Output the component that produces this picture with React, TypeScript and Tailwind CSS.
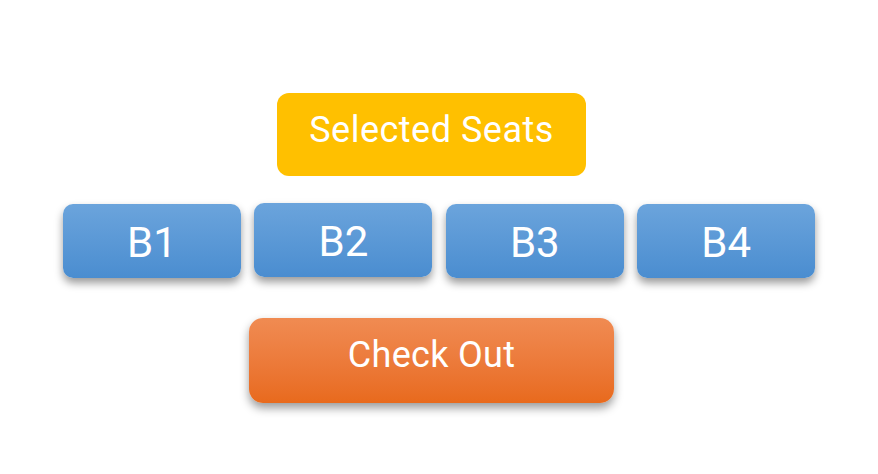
const seats = ['B1', 'B2', 'B3', 'B4'];

export default function App() {
  return (
    <div className="h-[474px] w-[878px] bg-white pt-[93px] font-['Roboto',sans-serif] text-white">
      <div className="ml-[277px] flex h-[83px] w-[309px] items-center justify-center rounded-[12px] bg-[#ffc000] pb-[10px] text-[36px] tracking-[0.5px]">
        Selected Seats
      </div>

      <div className="ml-[63px] mt-[28px] flex gap-[13.4px]">
        {seats.map((seat, i) => (
          <div
            key={seat}
            className={`flex h-[74px] w-[178px] items-center justify-center rounded-[10px] bg-gradient-to-b from-[#6ba4dc] to-[#4a8dd0] pt-[2px] text-[42px] shadow-[0_5px_9px_rgba(0,0,0,0.4)] ${i === 1 ? '-mt-px' : ''}`}
          >
            {seat}
          </div>
        ))}
      </div>

      <div className="ml-[249px] mt-[40px] flex h-[85px] w-[365px] items-center justify-center rounded-[14px] bg-gradient-to-b from-[#f08b52] to-[#e86a1c] pb-[12px] text-[36px] tracking-[0.3px] shadow-[0_5px_10px_rgba(0,0,0,0.4)]">
        Check Out
      </div>
    </div>
  );
}
